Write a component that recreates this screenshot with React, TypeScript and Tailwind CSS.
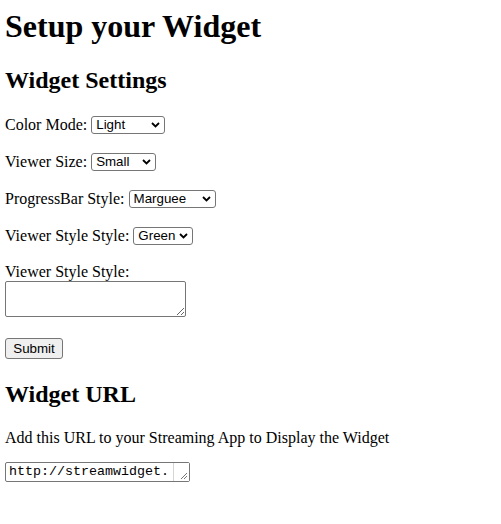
import React, { useState } from 'react';

const serif = "font-['Liberation_Serif','Times_New_Roman',serif]";
const sans = "font-['Liberation_Sans',Arial,sans-serif]";
const mono = "font-['Liberation_Mono','Courier_New',monospace]";

type SelectProps = {
  value: string;
  options: string[];
  width: string;
  onChange: (v: string) => void;
};

const Select: React.FC<SelectProps> = ({ value, options, width, onChange }) => {
  return (
    <span className={`relative inline-block ${width}`}>
      <select
        value={value}
        onChange={(e) => onChange(e.target.value)}
        className={`${sans} appearance-none block w-full h-[18px] bg-white border border-[#767676] rounded-[3px] pl-[4px] pr-[16px] py-0 text-[13.33px] leading-[16px] text-black`}
      >
        {options.map((o) => (
          <option key={o} value={o}>{o}</option>
        ))}
      </select>
      <svg
        className="absolute right-[5px] top-[6px] w-[9px] h-[6px] pointer-events-none"
        viewBox="0 0 9 6"
        fill="none"
      >
        <path d="M1 1l3.5 3.5L8 1" stroke="#000" strokeWidth="1.8" />
      </svg>
    </span>
  );
};

const App: React.FC = () => {
  const [colorMode, setColorMode] = useState('Light');
  const [viewerSize, setViewerSize] = useState('Small');
  const [progressStyle, setProgressStyle] = useState('Marguee');
  const [viewerStyle, setViewerStyle] = useState('Green');
  const [custom, setCustom] = useState('');

  return (
    <div className={`${serif} bg-white text-black min-h-[524px] pl-[5px] pt-[8px] text-[16px]`}>
      <h1 className="text-[32px] font-bold leading-[37px]">Setup your Widget</h1>

      <h2 className="mt-[21px] text-[24px] font-bold leading-[28px]">Widget Settings</h2>

      <form onSubmit={(e) => e.preventDefault()}>
        {/* select rows */}
        <div className="mt-[20px] flex flex-col gap-[16px]">
          <p className="flex items-center gap-[4px] h-[21px] leading-[21px]">
            <span>Color Mode:</span>
            <Select value={colorMode} options={['Light', 'Dark']} width="w-[74px]" onChange={setColorMode} />
          </p>
          <p className="flex items-center gap-[4px] h-[21px] leading-[21px]">
            <span>Viewer Size:</span>
            <Select value={viewerSize} options={['Small', 'Medium', 'Large']} width="w-[65px]" onChange={setViewerSize} />
          </p>
          <p className="flex items-center gap-[4px] h-[21px] leading-[21px]">
            <span>ProgressBar Style:</span>
            <Select value={progressStyle} options={['Marguee', 'Blocks']} width="w-[87px]" onChange={setProgressStyle} />
          </p>
          <p className="flex items-center gap-[4px] h-[21px] leading-[21px]">
            <span>Viewer Style Style:</span>
            <Select value={viewerStyle} options={['Green', 'Blue', 'Red']} width="w-[60px]" onChange={setViewerStyle} />
          </p>
        </div>

        <div className="mt-[16px]">
          <label className="block leading-[19px]">Viewer Style Style:</label>
          <textarea
            value={custom}
            onChange={(e) => setCustom(e.target.value)}
            className="block w-[181px] h-[36px] border border-[#767676] rounded-[2px] bg-white resize"
          />
        </div>

        <div className="mt-[21px]">
          <button
            type="submit"
            className={`${sans} block w-[58px] h-[21px] text-[13.33px] leading-[16px] bg-[#efefef] border border-[#767676] rounded-[3px] text-black`}
          >
            Submit
          </button>
        </div>
      </form>

      <h2 className="mt-[21px] text-[24px] font-bold leading-[28px]">Widget URL</h2>
      <p className="mt-[21px] leading-[18px]">Add this URL to your Streaming App to Display the Widget</p>
      <div className="mt-[15px] relative w-[185px] h-[20px]">
        <textarea
          readOnly
          rows={1}
          value="http://streamwidget.example.com/widget"
          className={`${mono} block w-full h-full border border-[#767676] rounded-[2px] bg-white text-[13.33px] leading-[16px] pl-[3px] pr-[18px] py-[1px] overflow-hidden resize-none text-black`}
        />
        {/* scrollbar gutter with resize grip */}
        <span className="absolute right-[1px] top-[1px] bottom-[1px] w-[16px] border-l border-[#d4d4d4] bg-white pointer-events-none">
          <svg className="absolute right-[1px] bottom-[1px] w-[8px] h-[8px]" viewBox="0 0 8 8">
            <path d="M7 1L1 7M7 4L4 7" stroke="#777" strokeWidth="1" />
          </svg>
        </span>
      </div>
    </div>
  );
};

export default App;
